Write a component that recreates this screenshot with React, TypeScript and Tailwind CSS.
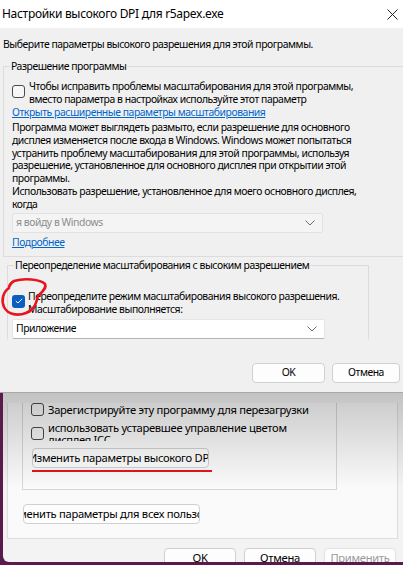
import React from 'react';

const Chevron = () => (
  <svg width="10" height="6" viewBox="0 0 10 6" className="text-[#6b6b6b]">
    <polyline points="0.5,0.5 5,5 9.5,0.5" fill="none" stroke="currentColor" strokeWidth="1" />
  </svg>
);

const Check = ({ checked = false, className = '' }: { checked?: boolean; className?: string }) =>
  checked ? (
    <span className={`flex h-[13px] w-[13px] shrink-0 items-center justify-center rounded-[3px] bg-[#0a5fc0] ${className}`}>
      <svg width="8" height="6" viewBox="0 0 8 6">
        <polyline points="0.8,3 3,5 7.2,0.8" fill="none" stroke="white" strokeWidth="1" />
      </svg>
    </span>
  ) : (
    <span className={`block h-[13px] w-[13px] shrink-0 rounded-[3px] border border-[#4a4a4a] bg-[#f7f7f7] ${className}`} />
  );

const Btn = ({ children, className = '' }: { children: React.ReactNode; className?: string }) => (
  <div
    className={`flex h-[20px] items-center overflow-hidden whitespace-nowrap rounded-[4px] border border-[#d0d0d0] bg-[#fdfdfd] ${className}`}
  >
    {children}
  </div>
);

export default function App() {
  return (
    <div className="relative h-[565px] w-[403px] overflow-hidden bg-[#5a1b4c] font-['Noto_Sans'] text-[10.4px] tracking-[-0.45px] text-black">
      {/* DPI dialog on top */}
      <div className="relative z-10 h-[393px] overflow-hidden border-b border-[#a8a8a8] bg-[#f0f0f0] whitespace-nowrap">
        <div className="flex h-[28px] items-center justify-between bg-white pl-[2px] pr-[5px]">
          <span className="text-[12px] leading-[14px] tracking-[-0.3px]">Настройки высокого DPI для r5apex.exe</span>
          <svg width="11" height="11" viewBox="0 0 11 11">
            <path d="M0.5 0.5L10.5 10.5M10.5 0.5L0.5 10.5" stroke="#222" strokeWidth="1" />
          </svg>
        </div>

        <p className="ml-[3px] mt-[10px] leading-[13px]">Выберите параметры высокого разрешения для этой программы.</p>

        <fieldset className="ml-[3px] mt-[9px] w-[420px] border border-[#dcdcdc] pb-[7px] pl-[8px]">
          <legend className="-ml-[2px] px-[1px] leading-[13px]">Разрешение программы</legend>
          <div className="mt-[7px] flex gap-[4px]">
            <Check className="mt-[5px]" />
            <div className="leading-[13px]">
              Чтобы исправить проблемы масштабирования для этой программы,
              <br />
              вместо параметра в настройках используйте этот параметр
            </div>
          </div>
          <a className="block w-fit leading-[13px] text-[#0066cc] underline">Открыть расширенные параметры масштабирования</a>
          <p className="mt-[2px] leading-[12.8px]">
            Программа может выглядеть размыто, если разрешение для основного
            <br />
            дисплея изменяется после входа в Windows. Windows может попытаться
            <br />
            устранить проблему масштабирования для этой программы, используя
            <br />
            разрешение, установленное для основного дисплея при открытии этой
            <br />
            программы.
            <br />
            Использовать разрешение, установленное для моего основного дисплея,
            <br />
            когда
          </p>
          <div className="mt-[2px] flex h-[20px] w-[311px] items-center justify-between rounded-[2px] border border-[#e3e3e3] bg-[#f4f4f4] pl-[3px] pr-[7px] text-[#8d8d8d]">
            <span>я войду в Windows</span>
            <Chevron />
          </div>
          <a className="mt-[3px] block w-fit leading-[13px] text-[#0066cc] underline">Подробнее</a>
        </fieldset>

        <fieldset className="ml-[7px] mt-[2px] w-[362px] border border-[#dcdcdc] border-b-transparent pl-[4px]">
          <legend className="ml-[2px] px-[1px] leading-[13px]">Переопределение масштабирования с высоким разрешением</legend>
          <div className="mt-[18px] flex gap-[3px]">
            <Check checked className="mt-[5px]" />
            <div className="leading-[13px]">
              Переопределите режим масштабирования высокого разрешения.
              <br />
              Масштабирование выполняется:
            </div>
          </div>
          <div className="mt-[3px] flex h-[20px] w-[313px] items-center justify-between rounded-[2px] border border-[#e5e5e5] border-b-[#b4b4b4] bg-white pl-[3px] pr-[7px]">
            <span>Приложение</span>
            <Chevron />
          </div>
        </fieldset>

        <div className="mt-[23px] flex justify-end gap-[7px] pr-[3px]">
          <Btn className="w-[73px] justify-center">OK</Btn>
          <Btn className="w-[68px] justify-center">Отмена</Btn>
        </div>

        {/* red hand-drawn annotation circle */}
        <svg className="absolute left-0 top-[276px]" width="50" height="48" viewBox="0 0 50 48">
          <path
            d="M9 11 C10 8 12 6 14 5 C24 2 40 3 45 8 C47 12 42 16 38 20 C36 28 34 34 26 37 C18 40 8 39 4 31 C1 24 3 16 9 12"
            fill="none"
            stroke="#e8141e"
            strokeWidth="2.6"
            strokeLinecap="round"
          />
        </svg>
      </div>

      {/* properties window behind */}
      <div className="flex h-[169px] text-[11.2px] tracking-[-0.3px]">
        <div className="w-[3px] shrink-0" />
        <div className="relative flex-1 overflow-hidden whitespace-nowrap rounded-bl-[6px] bg-[#f3f3f3]">
          <div className="ml-[4px] h-[136px] w-[391px] border border-t-0 border-[#dedede] bg-[#fafafa] pl-[14px]">
            <div className="h-[87px] w-[315px] border border-t-0 border-[#d6d6d6] pl-[8px]">
              <div className="mt-[10px] flex items-center gap-[4px]">
                <Check />
                <span className="leading-[12px]">Зарегистрируйте эту программу для перезагрузки</span>
              </div>
              <div className="mt-[6px] flex gap-[4px]">
                <Check className="mt-[5px]" />
                <div className="h-[19px] overflow-hidden leading-[12px]">
                  использовать устаревшее управление цветом
                  <br />
                  дисплея ICC
                </div>
              </div>
              <Btn className="ml-[1px] mt-[7px] w-[177px] justify-center">Изменить параметры высокого DPI</Btn>
              <div className="ml-[1px] mt-[2px] h-[2px] w-[180px] bg-[#e8141e]" />
            </div>
            <Btn className="ml-[1px] mt-[14px] w-[177px] justify-start">
              <span className="-ml-[19px]">Изменить параметры для всех пользователей</span>
            </Btn>
          </div>
          <div className="mt-[9px] flex justify-end gap-[8px] pr-[7px]">
            <Btn className="w-[72px] justify-center">OK</Btn>
            <Btn className="w-[72px] justify-center">Отмена</Btn>
            <Btn className="w-[72px] justify-center border-[#e2e2e2] text-[#9a9a9a]">Применить</Btn>
          </div>
          {/* shadow cast by the dialog above */}
          <div className="pointer-events-none absolute inset-x-0 top-0 h-[95px] bg-linear-to-b from-black/20 to-transparent" />
        </div>
      </div>
    </div>
  );
}
